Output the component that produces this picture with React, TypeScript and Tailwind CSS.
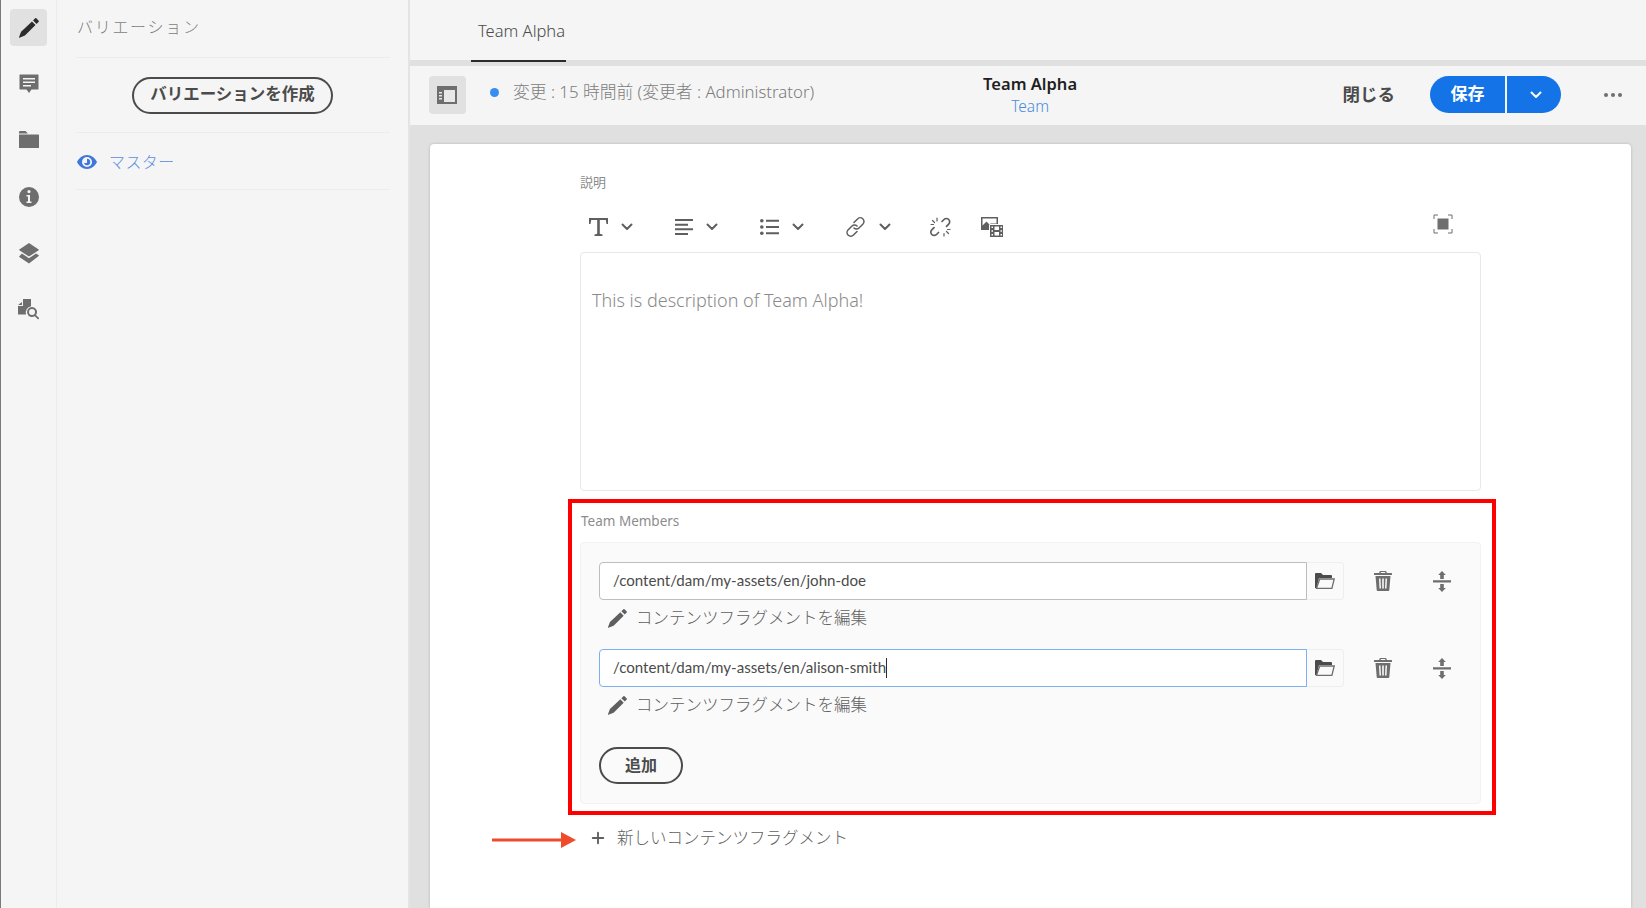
import { Plus } from "lucide-react";

const font = { fontFamily: '"Noto Sans", "Noto Sans CJK JP", sans-serif' };

function Chevron({ className = "" }: { className?: string }) {
  return (
    <svg viewBox="0 0 12 8" className={`h-[8px] w-[12px] ${className}`} fill="none" stroke="currentColor" strokeWidth="2" strokeLinecap="round" strokeLinejoin="round">
      <path d="M1.5 1.5 6 6l4.5-4.5" />
    </svg>
  );
}

function Pencil({ className = "" }: { className?: string }) {
  return (
    <svg viewBox="0 0 20 20" className={className} fill="currentColor">
      <path d="M15.6 1.2a.8.8 0 0 1 1.1 0l2.1 2.1a.8.8 0 0 1 0 1.1L16.9 6.3 13.7 3.1zM12.7 4.1l3.2 3.2-9.6 9.6-5 1.9a.3.3 0 0 1-.4-.4l1.9-5z" />
    </svg>
  );
}

function RailIcon({ children, active = false }: { children: React.ReactNode; active?: boolean }) {
  return (
    <div className={`flex h-[37px] w-[37px] items-center justify-center rounded-[4px] ${active ? "bg-[#e1e1e1] text-[#2c2c2c]" : "text-[#6e6e6e]"}`}>
      {children}
    </div>
  );
}

function Rail() {
  return (
    <div className="flex w-[57px] shrink-0 flex-col items-center gap-[19.4px] border-r border-[#ececec] border-l border-l-[#7a7a7a] bg-[#f5f5f5] pt-[9px]">
      <RailIcon active>
        <Pencil className="h-[22px] w-[22px]" />
      </RailIcon>
      <RailIcon>
        <svg viewBox="0 0 20 20" className="h-[20px] w-[20px]" fill="currentColor">
          <path fillRule="evenodd" d="M1 .5h18a.5.5 0 0 1 .5.5v14a.5.5 0 0 1-.5.5h-6.5L10 19l-2.500-3.500H1a.5.5 0 0 1-.5-.5V1A.5.5 0 0 1 1 .5zM4 4v1.500h12V4zm0 3.500V9h12V7.500zM4 11v1.500h8V11z" />
        </svg>
      </RailIcon>
      <RailIcon>
        <svg viewBox="0 0 20 17" className="mb-[1px] h-[17px] w-[20px]" fill="currentColor">
          <path d="M0 1a1 1 0 0 1 1-1h5.500l2.500 2.500h-9zM0 3.500h19.500a.5.5 0 0 1 .5.500v12.500a.5.5 0 0 1-.5.5H.5a.5.5 0 0 1-.5-.5z" />
        </svg>
      </RailIcon>
      <RailIcon>
        <svg viewBox="0 0 20 20" className="h-[20px] w-[20px]" fill="currentColor">
          <path fillRule="evenodd" d="M10 0a10 10 0 1 1 0 20 10 10 0 0 1 0-20zM10 3a1.600 1.600 0 1 0 0 3.200A1.600 1.600 0 0 0 10 3zM7.500 8v1.500H9v5H7.500V16h5v-1.500H11V8z" />
        </svg>
      </RailIcon>
      <RailIcon>
        <svg viewBox="0 0 20 21" className="h-[21px] w-[20px]" fill="currentColor">
          <path d="M10 0l9.700 6.500a.4.4 0 0 1 0 .7L10 13.600.3 7.200a.4.4 0 0 1 0-.7zM2.900 10.500 10 15.200l7.100-4.700 2.600 1.800a.4.4 0 0 1 0 .7L10 20.500.3 13.900a.4.4 0 0 1 0-.7z" />
        </svg>
      </RailIcon>
      <RailIcon>
        <svg viewBox="0 0 21 21" className="h-[21px] w-[21px]" fill="currentColor">
          <path d="M0 6l4-3v3zM5 0h8v7.300a6.500 6.500 0 0 0-5 8.200H.5a.5.500 0 0 1-.5-.5V7h5z" />
          <path fillRule="evenodd" d="M14 8a5 5 0 0 1 4 8l2.800 2.800a.8.8 0 0 1-1.200 1.200L16.800 17.200A5 5 0 1 1 14 8zm0 2a3 3 0 1 0 0 6 3 3 0 0 0 0-6z" />
        </svg>
      </RailIcon>
    </div>
  );
}

function Sidebar() {
  return (
    <div className="w-[353px] shrink-0 border-r-2 border-[#e4e4e4] bg-[#f5f5f5] pl-[19px] pr-[18px]">
      <div className="flex h-[58px] items-center border-b border-[#ececec] pb-[3px] pl-[1px] text-[16px] font-light tracking-[1.7px] text-[#7d7d7d]">バリエーション</div>
      <div className="flex h-[75px] items-center justify-center border-b border-[#ececec]">
        <button className="mr-[1px] h-[37px] w-[201px] rounded-full border-2 border-[#4b4b4b] pb-[2px] text-[16.5px] font-bold text-[#4b4b4b]">バリエーションを作成</button>
      </div>
      <div className="flex h-[57px] items-center border-b border-[#ececec] pl-[1px] text-[#3f78d8]">
        <svg viewBox="0 0 20 14" className="mt-[2px] h-[14px] w-[20px]" fill="currentColor">
          <path fillRule="evenodd" d="M10 0c4.500 0 8 3 10 7-2 4-5.500 7-10 7S2 11 0 7c2-4 5.500-7 10-7zm0 2a5 5 0 1 0 0 10 5 5 0 0 0 0-10zm0 1.800a3.200 3.200 0 1 1-3 4.200h3z" />
        </svg>
        <span className="ml-[12px] mt-[1px] text-[16px] font-light tracking-[0.4px] text-[#5b8fe0]">マスター</span>
      </div>
    </div>
  );
}

function TopBars() {
  return (
    <>
      <div className="flex h-[60px] shrink-0 items-end bg-[#f5f5f5] pl-[61px]">
        <div className="flex h-[62px] w-[95px] translate-y-[2px] items-center border-b-2 border-[#2c2c2c] pl-[7px] pt-[2px] text-[16.5px] font-light text-[#4b4b4b]">Team Alpha</div>
      </div>
      <div className="mt-[6px] flex h-[59px] shrink-0 items-center bg-[#f5f5f5] pb-[2px] pl-[19px] pr-[24px]">
        <div className="flex h-[38px] w-[37px] items-center justify-center rounded-[4px] bg-[#e1e1e1]">
          <svg viewBox="0 0 20 18" className="h-[18px] w-[20px]">
            <path fill="#6e6e6e" d="M0 0h20v18H0z" />
            <path fill="#e8e8e8" d="M7 4h11v12H7zM2 6h3v1.500H2zM2 9h3v1.500H2zM2 12h3v1.500H2z" />
          </svg>
        </div>
        <div className="mb-[5px] ml-[24px] h-[9px] w-[9px] rounded-full bg-[#378ef0]" />
        <div className="mb-[5px] ml-[14px] w-[445px] text-[16.8px] font-light text-[#7c7c7c]">変更 : 15 時間前 (変更者 : Administrator)</div>
        <div className="flex w-[145px] flex-col items-center leading-[22px]">
          <div className="text-[16.5px] font-semibold text-[#1f1f1f]">Team Alpha</div>
          <div className="text-[15.5px] font-light text-[#4a8be0]">Team</div>
        </div>
        <div className="ml-[240px] shrink-0 whitespace-nowrap text-[17.5px] font-bold text-[#4b4b4b]">閉じる</div>
        <div className="ml-[35px] flex h-[37px] shrink-0 text-white">
          <div className="flex w-[75px] items-center justify-center rounded-l-full bg-[#1473e6] pb-[1px] text-[17px] font-bold">保存</div>
          <div className="ml-[2px] flex w-[54px] items-center justify-center rounded-r-full bg-[#1473e6] pl-[3px]">
            <Chevron />
          </div>
        </div>
        <div className="ml-[43px] flex shrink-0 gap-[3px]">
          <span className="h-[4px] w-[4px] rounded-full bg-[#6e6e6e]" />
          <span className="h-[4px] w-[4px] rounded-full bg-[#6e6e6e]" />
          <span className="h-[4px] w-[4px] rounded-full bg-[#6e6e6e]" />
        </div>
      </div>
    </>
  );
}

function ToolGroup({ width, children, chevron = true }: { width: string; children: React.ReactNode; chevron?: boolean }) {
  return (
    <div className={`flex items-center gap-[13px] text-[#5f5f5f] ${width}`}>
      {children}
      {chevron && <Chevron />}
    </div>
  );
}

function EditorToolbar() {
  return (
    <div className="flex h-[40px] items-center pl-[9px] pr-[28px]">
      <ToolGroup width="w-[86px]">
        <svg viewBox="0 0 19 18" className="h-[18px] w-[19px]" fill="currentColor">
          <path d="M0 0h19v6h-1.500l-.7-4H10.800V15.800l2.700.7V18h-8v-1.500l2.700-.7V2H2.200l-.7 4H0z" />
        </svg>
      </ToolGroup>
      <ToolGroup width="w-[85px]">
        <svg viewBox="0 0 18 16" className="h-[16px] w-[18px]" fill="currentColor">
          <path d="M0 0h18v2H0zM0 4.700h13v2H0zM0 9.300h18v2H0zM0 14h13v2H0z" />
        </svg>
      </ToolGroup>
      <ToolGroup width="w-[85px]">
        <svg viewBox="0 0 19 16" className="h-[16px] w-[19px]" fill="currentColor">
          <circle cx="1.800" cy="1.800" r="1.800" />
          <circle cx="1.800" cy="8" r="1.800" />
          <circle cx="1.800" cy="14.200" r="1.800" />
          <path d="M6 .8h13v2H6zM6 7h13v2H6zM6 13.200h13v2H6z" />
        </svg>
      </ToolGroup>
      <ToolGroup width="w-[85px]">
        <svg viewBox="0 0 21 20" className="h-[20px] w-[21px]" fill="none" stroke="currentColor" strokeWidth="1.500" strokeLinecap="round">
          <path d="M9 5.500 12.500 2a3.500 3.500 0 0 1 5.500 5l-4 4a3.500 3.500 0 0 1-5 0" />
          <path d="M12 14.500 8.500 18a3.500 3.500 0 0 1-5.500-5l4-4a3.500 3.500 0 0 1 5 0" />
        </svg>
      </ToolGroup>
      <ToolGroup width="w-[51px]" chevron={false}>
        <svg viewBox="0 0 21 20" className="h-[20px] w-[21px]" fill="none" stroke="currentColor" strokeWidth="1.700" strokeLinecap="round">
          <path d="M12 4.500 14 2.500a3.300 3.300 0 0 1 4.700 4.700l-2.200 2.200" />
          <path d="M8.500 15.500 6.500 17.500a3.300 3.300 0 0 1-4.700-4.700L4 10.600" />
          <path d="M7 1v3M2.500 3.500l2 2M1 7.500h2.500M14 19v-2.500M18.500 16.500l-2-2M20 12.500h-2.500" strokeWidth="1.200" />
        </svg>
      </ToolGroup>
      <svg viewBox="0 0 22 20" className="h-[20px] w-[22px] text-[#5f5f5f]" fill="currentColor">
        <path fillRule="evenodd" d="M0 0h17v7H8v6H0zM1.500 1.500v7l4-4 3 3 1-1H15.500V1.500z" />
        <path d="M9 8h13v12H9z" />
        <path fill="#fff" d="M10.500 9.500h1.500V11h-1.500zM10.500 13.250h1.500v1.500h-1.500zM10.500 17h1.500v1.500h-1.500zM19.500 9.500H21V11h-1.500zM19.500 13.250H21v1.500h-1.500zM19.500 17H21v1.500h-1.500zM13.500 9.500h4.500v3.500h-4.500zM13.500 15h4.500v3.500h-4.500z" />
      </svg>
      <svg viewBox="0 0 20 20" className="ml-auto mb-[6px] h-[20px] w-[20px] text-[#6e6e6e]" fill="none" stroke="currentColor" strokeWidth="1">
        <path d="M5 1H1v4M15 1h4v4M5 19H1v-4M15 19h4v-4" />
        <path fill="currentColor" stroke="none" d="M4.500 4.500h11v11h-11z" />
      </svg>
    </div>
  );
}

function FragmentRow({ value, focused = false }: { value: string; focused?: boolean }) {
  return (
    <div>
      <div className="flex h-[38px] items-center">
        <div className={`flex h-full w-[708px] items-center rounded-l-[4px] border bg-white pb-[1px] pl-[13px] font-['Lato'] text-[15.1px] text-[#4b4b4b] ${focused ? "border-[#7fb0ee]" : "border-[#bdbdbd]"}`}>
          {value}
          {focused && <span className="h-[20px] w-px bg-[#2c2c2c]" />}
        </div>
        <div className="flex h-full w-[37px] items-center justify-center rounded-r-[4px] border border-l-0 border-[#eeeeee] bg-[#fafafa] text-[#4b4b4b]">
          <svg viewBox="0 0 20 16" className="h-[16px] w-[20px]">
            <path fill="#4b4b4b" d="M0 1a1 1 0 0 1 1-1h5l2 2h8a1 1 0 0 1 1 1v2H4L1.500 15H0z" />
            <path fill="#fafafa" stroke="#6e6e6e" strokeWidth="1.300" d="M4.700 6h14.500l-2.300 9.300H1.500z" />
          </svg>
        </div>
        <svg viewBox="0 0 18 20" className="ml-[30px] h-[20px] w-[18px] text-[#6e6e6e]" fill="currentColor">
          <path fillRule="evenodd" d="M6 0h6l1 2h4.500a.5.5 0 0 1 .5.5V4H0V2.500A.5.5 0 0 1 .5 2H5zM7 1l-.5 1h5L11 1zM1.500 5h15l-1.200 14a1 1 0 0 1-1 1H3.700a1 1 0 0 1-1-1zM5 7.500l.5 10h1.500l-.5-10zm3.200 0v10h1.600v-10zm3.300 0-.5 10h1.500l.5-10z" />
        </svg>
        <svg viewBox="0 0 18 21" className="ml-[41px] h-[21px] w-[18px] text-[#6e6e6e]" fill="currentColor">
          <path d="M9 0l3.800 4H10.800v4H7.200V4H5.200zM0 9.300h18v2.200H0zM7.200 13h3.600v4h2L9 21l-3.800-4h2z" />
        </svg>
      </div>
      <div className="flex h-[49px] items-center gap-[8px] pb-[13px] pl-[8px] text-[#5f5f5f]">
        <Pencil className="h-[21px] w-[21px]" />
        <span className="text-[16.5px] font-light">コンテンツフラグメントを編集</span>
      </div>
    </div>
  );
}

function TeamMembers() {
  return (
    <div className="relative mt-[18px]">
      <div className="flex h-[21px] items-center pl-[1px] pt-[4px] text-[13.5px] text-[#8c8c8c]">Team Members</div>
      <div className="mt-[12px] rounded-[4px] border border-[#f2f2f2] bg-[#fafafa] pl-[18px] pt-[19px] pb-[19px]">
        <FragmentRow value="/content/dam/my-assets/en/john-doe" />
        <FragmentRow value="/content/dam/my-assets/en/alison-smith" focused />
        <button className="mt-[11px] block h-[37px] w-[84px] rounded-full border-2 border-[#4b4b4b] pb-[2px] text-[16px] font-bold text-[#4b4b4b]">追加</button>
      </div>
      <div className="absolute -left-[12px] -right-[15px] -top-[10px] bottom-[-11px] border-4 border-[#ff0000]" />
    </div>
  );
}

function NewFragment() {
  return (
    <div className="relative ml-[9px] mt-[22px] flex h-[24px] items-center text-[#5f5f5f]">
      <Plus className="h-[18px] w-[18px]" strokeWidth={2.5} />
      <span className="ml-[10px] text-[16.5px] font-light">新しいコンテンツフラグメント</span>
      <svg viewBox="0 0 84 16" className="absolute -left-[97px] top-[6px] h-[16px] w-[84px]">
        <path d="M0 6.500h69V0l15 8-15 8V9.500H0z" fill="#ee4b2b" />
      </svg>
    </div>
  );
}

export default function App() {
  return (
    <div className="flex h-[908px] w-[1646px] overflow-hidden bg-[#e0e0e0]" style={font}>
      <Rail />
      <Sidebar />
      <main className="flex min-w-0 flex-1 flex-col">
        <TopBars />
        <div className="ml-[20px] mr-[15px] mt-[19px] flex-1 rounded-t-[4px] bg-white pl-[150px] pr-[150px] pt-[29px] shadow-[0_0_3px_rgba(0,0,0,0.2)]">
          <div className="flex h-[20px] items-center text-[13px] text-[#8c8c8c]">説明</div>
          <div className="mt-[14px]">
            <EditorToolbar />
          </div>
          <div className="mt-[5px] h-[239px] rounded-[4px] border border-[#e8e8e8] pl-[11px] pt-[34px] text-[18px] font-light text-[#8a8a8a]">This is description of Team Alpha!</div>
          <TeamMembers />
          <NewFragment />
        </div>
      </main>
    </div>
  );
}
